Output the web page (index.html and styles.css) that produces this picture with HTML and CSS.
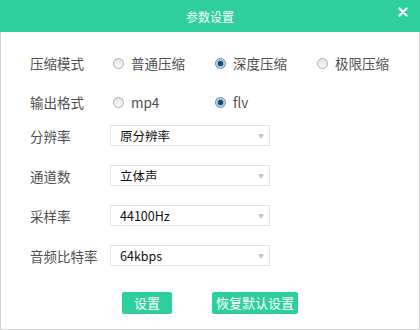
FILE: index.html
```html
<!DOCTYPE html>
<html lang="zh-CN">
<head>
  <meta charset="UTF-8" />
  <title>参数设置</title>
  <link rel="stylesheet" href="styles.css">
</head>
<body>

  <div class="dialog">
    <div class="dialog-head">
      <span class="dialog-title">参数设置</span>
      <svg class="dialog-close" width="10" height="10" viewBox="0 0 10 10">
        <path d="M1.5 1.5 L8.5 8.5 M8.5 1.5 L1.5 8.5" stroke="#fff" stroke-width="2.4" stroke-linecap="round"/>
      </svg>
    </div>

    <div class="dialog-body">
      <div class="row row-first">
        <span class="label">压缩模式</span>
        <label class="option"><i class="radio"></i>普通压缩</label>
        <label class="option"><i class="radio checked"></i>深度压缩</label>
        <label class="option"><i class="radio"></i>极限压缩</label>
      </div>

      <div class="row row-second">
        <span class="label">输出格式</span>
        <label class="option"><i class="radio"></i>mp4</label>
        <label class="option"><i class="radio checked"></i>flv</label>
      </div>

      <div class="row">
        <span class="label">分辨率</span>
        <div class="select">原分辨率<span class="arrow">▼</span></div>
      </div>

      <div class="row">
        <span class="label">通道数</span>
        <div class="select">立体声<span class="arrow">▼</span></div>
      </div>

      <div class="row">
        <span class="label">采样率</span>
        <div class="select">44100Hz<span class="arrow">▼</span></div>
      </div>

      <div class="row">
        <span class="label">音频比特率</span>
        <div class="select">64kbps<span class="arrow">▼</span></div>
      </div>

      <div class="buttons">
        <button class="btn btn-set">设置</button>
        <button class="btn">恢复默认设置</button>
      </div>
    </div>
  </div>

</body>
</html>
```

FILE: styles.css
```css
/* Page */
body, html {
  margin: 0; padding: 0;
  background: #fff;
  font-family: "Noto Sans CJK SC", "Noto Sans", sans-serif;
}

/* Dialog frame */
.dialog {
  width: 420px;
  height: 330px;
  box-sizing: border-box;
  border: 1px solid #d4d4d4;
  border-top: none;
  background: #fff;
}
.dialog-head {
  position: relative;
  height: 32px;
  margin: 0 -1px;
  background: #2ecf9d;
  color: #fff;
  display: flex;
  align-items: center;
  justify-content: center;
}
.dialog-title {
  font-size: 12px;
}
.dialog-close {
  position: absolute;
  right: 12px;
  top: 7px;
}

/* Form rows */
.dialog-body {
  padding: 20px 0 0 29px;
}
.row {
  display: flex;
  align-items: center;
  height: 21px;
  margin-bottom: 19px;
}
.row-first {
  height: 22px;
  margin-bottom: 17px;
}
.row-second {
  height: 22px;
  margin-bottom: 12px;
}
.label {
  width: 80px;
  font-size: 13.5px;
  color: #505050;
}

/* Radio options */
.option {
  width: 102px;
  display: flex;
  align-items: center;
  font-size: 13.5px;
  color: #505050;
}
.radio {
  width: 11px;
  height: 11px;
  margin: 0 7px 0 3px;
  box-sizing: border-box;
  border: 1px solid #ababab;
  border-radius: 50%;
  background: linear-gradient(#e4e4e4, #fbfbfb);
}
.radio.checked {
  border-color: #5b8db5;
  background: radial-gradient(circle, #23476b 0 2.5px, #8fc1dd 3px, #d6ecf7 5px);
}

/* Select boxes */
.select {
  position: relative;
  width: 160px;
  height: 21px;
  box-sizing: border-box;
  border: 1px solid #e4e4e4;
  padding-left: 9px;
  font-size: 12.5px;
  line-height: 19px;
  color: #111;
}
.arrow {
  position: absolute;
  right: 5px;
  top: 0;
  font-size: 6px;
  color: #c4c4c4;
}

/* Buttons */
.buttons {
  display: flex;
  justify-content: center;
  gap: 40px;
  margin: 26px 0 0 -29px;
}
.btn {
  height: 22px;
  min-width: 50px;
  padding: 0 4px;
  border: none;
  border-radius: 2px;
  background: #2ecf9d;
  color: #fff;
  font-family: inherit;
  font-size: 13px;
  line-height: 22px;
  cursor: pointer;
}
```
